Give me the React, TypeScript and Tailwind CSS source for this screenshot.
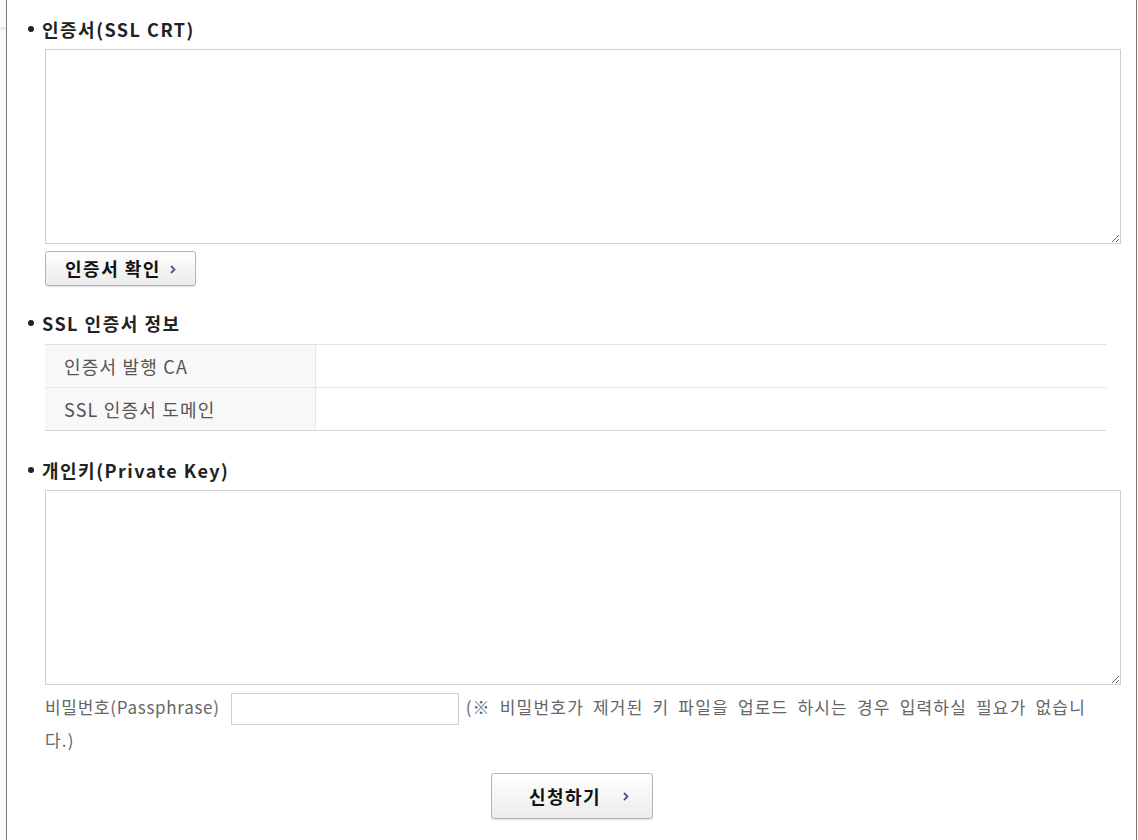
import { useState } from 'react';

function Bullet({ children }: { children: React.ReactNode }) {
  return (
    <div className="flex items-center h-[24px] pl-[21px]">
      <span className="w-[6px] h-[6px] rounded-full bg-[#222] mr-[8px]" />
      <h3 className="text-[18px] font-bold text-[#222] leading-[24px] tracking-[1.5px]">{children}</h3>
    </div>
  );
}

function Chevron() {
  return (
    <svg width="6" height="9" viewBox="0 0 6 9" className="ml-[9px] mt-[1px]">
      <path d="M1 1 L4.5 4.5 L1 8" fill="none" stroke="#4b5a78" strokeWidth="1.8" />
    </svg>
  );
}

export default function App() {
  const [crt, setCrt] = useState('');
  const [key, setKey] = useState('');
  const [pass, setPass] = useState('');

  const infoRows = [
    { label: '인증서 발행 CA', value: '' },
    { label: 'SSL 인증서 도메인', value: '' },
  ];

  return (
    <div className="flex h-[840px] overflow-hidden bg-white font-['Noto_Sans_CJK_KR','Noto_Sans',sans-serif]">
      {/* left gutter */}
      <div className="w-[6px] bg-[#fafafa] flex flex-col">
        <div className="mt-[27px] h-[3px] bg-[#ececec]" />
      </div>

      <div className="flex-1 border-l border-r border-[#7b7b7b] pt-[17px] pr-[15px]">
        {/* certificate */}
        <Bullet>인증서(SSL CRT)</Bullet>
        <div className="ml-[38px] mt-[8px]">
          <textarea
            value={crt}
            onChange={(e) => setCrt(e.target.value)}
            className="block w-full h-[195px] border border-[#cfcfcf] outline-none p-2 text-[14px]"
          />
          <button className="mt-[7px] h-[35px] w-[151px] flex items-center justify-center border border-[#b4b4b4] rounded-[3px] bg-gradient-to-b from-white to-[#ebebeb] shadow-[0_1px_1px_rgba(0,0,0,0.12)] text-[18px] font-bold text-[#111] tracking-[1.5px]">
            인증서 확인
            <Chevron />
          </button>
        </div>

        {/* info table */}
        <div className="mt-[25px]">
          <Bullet>SSL 인증서 정보</Bullet>
        </div>
        <div className="ml-[38px] mr-[15px] mt-[9px] border-t border-[#e2e2e2]">
          {infoRows.map((row, i) => (
            <div
              key={i}
              className={`flex h-[43px] border-b ${i === infoRows.length - 1 ? 'border-[#d6d6d6]' : 'border-[#e6e6e6]'}`}
            >
              <div className="w-[271px] bg-[#f8f8f8] border-r border-[#e8e8e8] flex items-center pl-[19px] text-[18px] tracking-[1.2px] text-[#555]">
                {row.label}
              </div>
              <div className="flex-1 flex items-center pl-4 text-[15px] text-[#333]">{row.value}</div>
            </div>
          ))}
        </div>

        {/* private key */}
        <div className="mt-[27px]">
          <Bullet>개인키(Private Key)</Bullet>
        </div>
        <div className="ml-[38px] mt-[8px]">
          <textarea
            value={key}
            onChange={(e) => setKey(e.target.value)}
            className="block w-full h-[195px] border border-[#cfcfcf] outline-none p-2 text-[14px]"
          />
          <div className="mt-[7px] mr-[15px] text-[17px] leading-[30px] text-[#666] break-all tracking-[0.7px]">
            <label className="mr-[11px]">비밀번호(Passphrase)</label>
            <input
              type="password"
              value={pass}
              onChange={(e) => setPass(e.target.value)}
              className="inline-block align-middle w-[228px] h-[32px] border border-[#cfcfcf] outline-none px-2 mr-[7px]"
            />
            <span className="[word-spacing:4px] tracking-[1.2px]">(※ 비밀번호가 제거된 키 파일을 업로드 하시는 경우 입력하실 필요가 없습니다.)</span>
          </div>
        </div>

        <div className="flex justify-center mt-[18px] pl-[16px]">
          <button className="h-[46px] w-[162px] flex items-center justify-center border border-[#b4b4b4] rounded-[3px] bg-gradient-to-b from-white to-[#ececec] shadow-[0_1px_1px_rgba(0,0,0,0.12)] text-[18px] font-bold text-[#111] tracking-[1.5px] pl-[14px]">
            신청하기
            <span className="w-[13px]" />
            <Chevron />
          </button>
        </div>
      </div>
      <div className="w-[1px] bg-white" />
    </div>
  );
}
